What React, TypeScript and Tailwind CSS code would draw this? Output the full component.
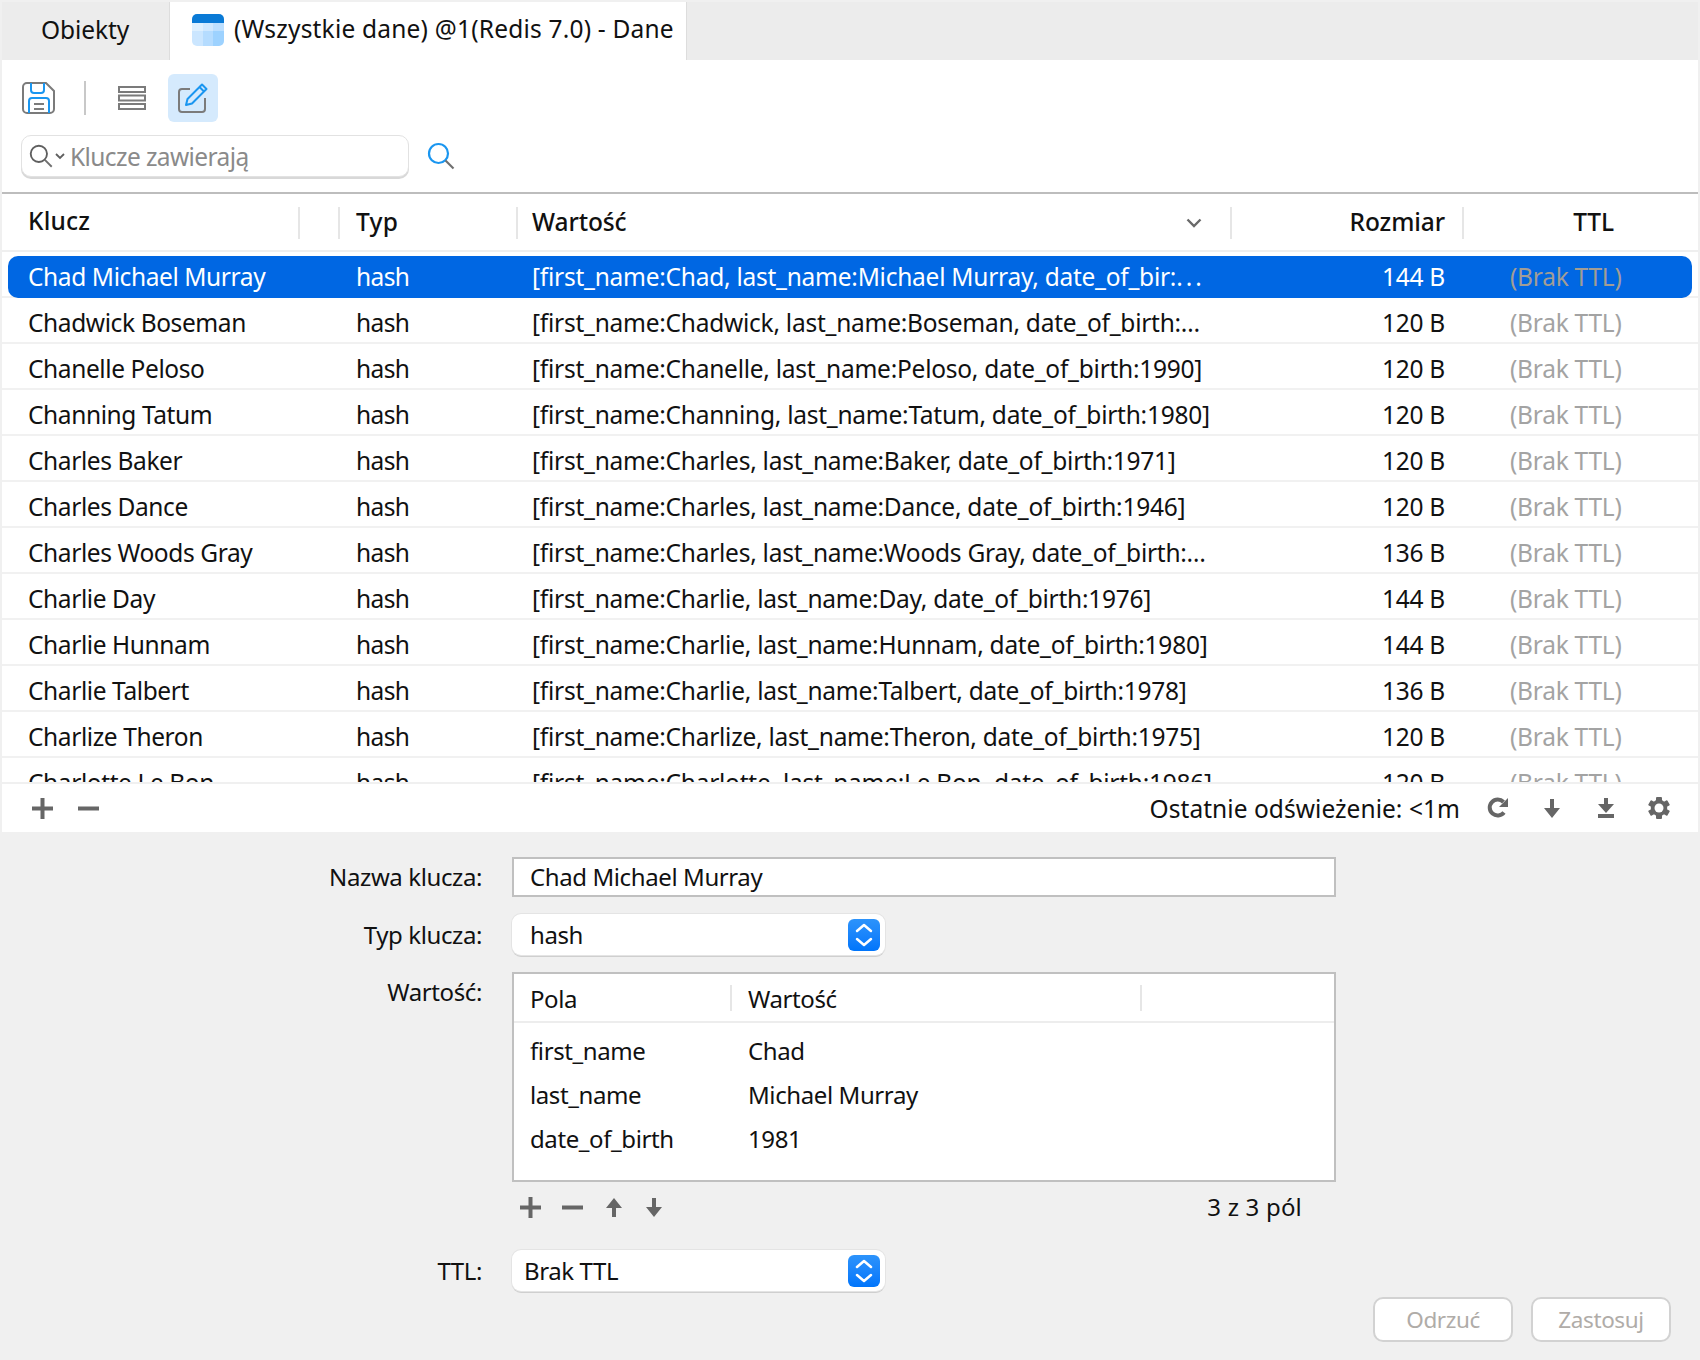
const rows = [
  { key: "Chad Michael Murray", value: "[first_name:Chad, last_name:Michael Murray, date_of_bir:", tail: "...", size: "144 B" },
  { key: "Chadwick Boseman", value: "[first_name:Chadwick, last_name:Boseman, date_of_birth:…", size: "120 B" },
  { key: "Chanelle Peloso", value: "[first_name:Chanelle, last_name:Peloso, date_of_birth:1990]", size: "120 B" },
  { key: "Channing Tatum", value: "[first_name:Channing, last_name:Tatum, date_of_birth:1980]", size: "120 B" },
  { key: "Charles Baker", value: "[first_name:Charles, last_name:Baker, date_of_birth:1971]", size: "120 B" },
  { key: "Charles Dance", value: "[first_name:Charles, last_name:Dance, date_of_birth:1946]", size: "120 B" },
  { key: "Charles Woods Gray", value: "[first_name:Charles, last_name:Woods Gray, date_of_birth:…", size: "136 B" },
  { key: "Charlie Day", value: "[first_name:Charlie, last_name:Day, date_of_birth:1976]", size: "144 B" },
  { key: "Charlie Hunnam", value: "[first_name:Charlie, last_name:Hunnam, date_of_birth:1980]", size: "144 B" },
  { key: "Charlie Talbert", value: "[first_name:Charlie, last_name:Talbert, date_of_birth:1978]", size: "136 B" },
  { key: "Charlize Theron", value: "[first_name:Charlize, last_name:Theron, date_of_birth:1975]", size: "120 B" },
  { key: "Charlotte Le Bon", value: "[first_name:Charlotte, last_name:Le Bon, date_of_birth:1986]", size: "120 B" },
];

const fields = [
  { name: "first_name", value: "Chad" },
  { name: "last_name", value: "Michael Murray" },
  { name: "date_of_birth", value: "1981" },
];

function TableIcon() {
  return (
    <svg width="32" height="32" viewBox="0 0 32 32">
      <defs>
        <clipPath id="tab-clip">
          <rect width="32" height="32" rx="5" />
        </clipPath>
      </defs>
      <g clipPath="url(#tab-clip)">
        <rect width="32" height="9" fill="#0a7ad6" />
        <rect y="9" width="11" height="8" fill="#def0ff" />
        <rect x="11" y="9" width="10" height="8" fill="#cfe8ff" />
        <rect x="21" y="9" width="11" height="8" fill="#bcdfff" />
        <rect y="17" width="11" height="15" fill="#cbe6ff" />
        <rect x="11" y="17" width="10" height="15" fill="#b5dcff" />
        <rect x="21" y="17" width="11" height="15" fill="#9dd2ff" />
      </g>
    </svg>
  );
}

function SaveIcon() {
  return (
    <svg width="34" height="34" viewBox="0 0 34 34" fill="none" strokeWidth="2">
      <path d="M5 2h19l8 8v18a4 4 0 0 1-4 4H5a4 4 0 0 1-4-4V6a4 4 0 0 1 4-4z" stroke="#7b7b7b" />
      <path d="M9 2v7a3 3 0 0 0 3 3h7a3 3 0 0 0 3-3V2" stroke="#1a96f0" />
      <path d="M7 32V20a3 3 0 0 1 3-3h14a3 3 0 0 1 3 3v12" stroke="#1a96f0" />
      <path d="M12 23h10M12 28h10" stroke="#7b7b7b" />
    </svg>
  );
}

function ListIcon() {
  return (
    <svg width="30" height="24" viewBox="0 0 30 24" fill="none" stroke="#7b7b7b" strokeWidth="2">
      <rect x="2" y="1" width="26" height="5" />
      <rect x="2" y="9.5" width="26" height="5" />
      <rect x="2" y="18" width="26" height="5" />
    </svg>
  );
}

function EditIcon() {
  return (
    <svg width="32" height="32" viewBox="0 0 32 32" fill="none" strokeWidth="2">
      <path d="M13 7H5a3 3 0 0 0-3 3v17a3 3 0 0 0 3 3h20a3 3 0 0 0 3-3V16" stroke="#7b7b7b" />
      <path d="M9 23l1.5-6L25 2.5l4.5 4.5L15 21.5z" stroke="#1a96f0" strokeLinejoin="round" />
      <path d="M22.5 5l4.5 4.5" stroke="#1a96f0" />
    </svg>
  );
}

function SearchIcon({ color, size }: { color: string; size: number }) {
  return (
    <svg width={size} height={size} viewBox="0 0 28 28" fill="none" strokeWidth="2.2">
      <circle cx="11.5" cy="11.5" r="9.5" stroke={color} />
      <path d="M18.5 18.5l8 8" stroke="#6f6f6f" />
    </svg>
  );
}

function PlusIcon() {
  return (
    <svg width="21" height="21" viewBox="0 0 21 21" fill="#666">
      <path d="M8.5 0h4v8.5h8.5v4h-8.5v8.5h-4v-8.5H0v-4h8.5z" />
    </svg>
  );
}

function MinusIcon() {
  return (
    <svg width="21" height="21" viewBox="0 0 21 21" fill="#666">
      <rect y="8.5" width="21" height="4" />
    </svg>
  );
}

function Refresh() {
  return (
    <svg width="22" height="22" viewBox="0 0 22 22" fill="none">
      <path d="M17 15.5A8 8 0 1 1 16.5 5" stroke="#666" strokeWidth="4" />
      <path d="M21 1v9h-9z" fill="#666" />
    </svg>
  );
}

function ArrowDown() {
  return (
    <svg width="16" height="19" viewBox="0 0 16 19" fill="#666">
      <path d="M6 0h4v9h6l-8 10-8-10h6z" />
    </svg>
  );
}

function ArrowUp() {
  return (
    <svg width="16" height="19" viewBox="0 0 16 19" fill="#666">
      <path d="M6 19h4v-9h6L8 0 0 10h6z" />
    </svg>
  );
}

function DownloadTo() {
  return (
    <svg width="16" height="20" viewBox="0 0 16 20" fill="#666">
      <path d="M6 0h4v6h6l-8 9-8-9h6z" />
      <rect y="16" width="16" height="4" />
    </svg>
  );
}

function Gear() {
  return (
    <svg width="22" height="22" viewBox="0 0 22 22">
      <g fill="#666">
        <rect x="8" y="0" width="6" height="22" rx="1" />
        <rect x="8" y="0" width="6" height="22" rx="1" transform="rotate(60 11 11)" />
        <rect x="8" y="0" width="6" height="22" rx="1" transform="rotate(120 11 11)" />
      </g>
      <circle cx="11" cy="11" r="6.5" fill="none" stroke="#666" strokeWidth="3.5" />
      <circle cx="11" cy="11" r="4.5" fill="#fff" />
    </svg>
  );
}

function Stepper() {
  return (
    <div className="flex h-[32px] w-[32px] items-center justify-center rounded-[6px] bg-gradient-to-b from-[#2c93fb] to-[#0075fb]">
      <svg width="20" height="28" viewBox="0 0 20 28" fill="none" stroke="#fff" strokeWidth="2.5" strokeLinecap="round" strokeLinejoin="round">
        <path d="M3 10l7-6 7 6M3 18l7 6 7-6" />
      </svg>
    </div>
  );
}

function Select({ label, pad }: { label: string; pad: string }) {
  return (
    <div className="flex h-[41px] w-[373px] items-center justify-between rounded-[9px] bg-white pr-[5px] shadow-[0_0_0_1px_#e4e4e4,0_2px_0_#cfcfcf]">
      <span className={pad}>{label}</span>
      <Stepper />
    </div>
  );
}

export default function App() {
  return (
    <div className="flex h-[1360px] w-[1700px] flex-col bg-[#f0f0f0] px-[2px] pb-[2px] pt-[2px] font-['Noto_Sans',sans-serif] text-[24.5px] leading-none tracking-[-0.25px] text-[#111]">
      {/* tabs */}
      <div className="flex h-[58px] shrink-0 bg-[#ececec]">
        <div className="flex w-[167px] items-center pl-[39px] pb-[2px] tracking-[-0.1px]">Obiekty</div>
        <div className="flex w-[518px] items-center gap-[10px] bg-white pb-[3px] pl-[23px] tracking-[0.2px] shadow-[inset_1px_0_0_#ddd,inset_-1px_0_0_#ddd]">
          <TableIcon />
          <span>(Wszystkie dane) @1(Redis 7.0) - Dane</span>
        </div>
      </div>

      <div className="flex shrink-0 flex-col bg-white">
        {/* toolbar */}
        <div className="flex h-[134px] flex-col border-b-2 border-[#bdbdbd] pl-[20px]">
          <div className="mt-[14px] flex h-[48px] items-center">
            <SaveIcon />
            <div className="ml-[28px] h-[34px] w-[2px] bg-[#c8c8c8]" />
            <div className="ml-[31px]">
              <ListIcon />
            </div>
            <div className="ml-[21px] flex h-[48px] w-[50px] items-center justify-center rounded-[6px] bg-[#d5eafd]">
              <EditIcon />
            </div>
          </div>
          <div className="-ml-px mt-[13px] flex items-center">
            <div className="flex h-[42px] w-[388px] items-center rounded-[10px] border border-[#e2e2e2] bg-white pl-[7px] tracking-[-0.6px] text-[#8a8a8a] shadow-[0_2px_0_#d8d8d8]">
              <SearchIcon color="#5f5f5f" size={24} />
              <svg width="10" height="7" viewBox="0 0 10 7" fill="none" stroke="#5f5f5f" strokeWidth="1.8" className="ml-[2px] mr-[5px]">
                <path d="M1 1l4 4 4-4" />
              </svg>
              <span className="pt-[2px]">Klucze zawierają</span>
            </div>
            <div className="ml-[18px]">
              <SearchIcon color="#1a96f0" size={28} />
            </div>
          </div>
        </div>

        {/* column headers */}
        <div className="flex h-[58px] items-center border-b-2 border-[#efefef] pt-[1px] font-medium tracking-[-0.1px]">
          <div className="flex h-[32px] w-[298px] items-center border-r-2 border-[#e6e6e6] pb-[3px] pl-[26px] tracking-[0.2px]">Klucz</div>
          <div className="h-[32px] w-[40px] border-r-2 border-[#e6e6e6]" />
          <div className="flex h-[32px] w-[178px] items-center border-r-2 border-[#e6e6e6] pl-[16px] tracking-[0.3px]">Typ</div>
          <div className="flex h-[32px] w-[714px] items-center justify-between border-r-2 border-[#e6e6e6] pl-[14px] pr-[28px]">
            <span>Wartość</span>
            <svg width="16" height="10" viewBox="0 0 16 10" fill="none" stroke="#6a6a6a" strokeWidth="2.4">
              <path d="M1.5 1.5L8 8l6.5-6.5" />
            </svg>
          </div>
          <div className="flex h-[32px] w-[232px] items-center justify-end border-r-2 border-[#e6e6e6] pr-[17px]">Rozmiar</div>
          <div className="flex h-[32px] flex-1 items-center justify-end pr-[84px]">TTL</div>
        </div>

        {/* rows */}
        <div className="h-[530px] overflow-hidden">
          {rows.map((row, i) => (
            <div key={row.key} className="h-[46px] px-[6px] pt-[4px] shadow-[inset_0_-2px_0_#f1f1f1]">
              <div
                className={`grid h-[42px] grid-cols-[348px_176px_699px_214px_1fr] items-center whitespace-nowrap rounded-[10px] ${
                  i === 0 ? "bg-[#0067e3] text-white" : ""
                }`}
              >
                <div className="pl-[20px] tracking-[-0.4px]">{row.key}</div>
                <div className="tracking-[-0.6px]">hash</div>
                <div>
                  {row.value}
                  {row.tail && <span className="tracking-[3px]">{row.tail}</span>}
                </div>
                <div className="text-right">{row.size}</div>
                <div className={`pl-[65px] ${i === 0 ? "text-[#a29d95]" : "text-[#a3a3a3]"}`}>(Brak TTL)</div>
              </div>
            </div>
          ))}
        </div>

        {/* list footer */}
        <div className="flex h-[50px] items-center border-t-2 border-[#f0f0f0] pl-[30px] pr-[28px]">
          <PlusIcon />
          <div className="ml-[25px]">
            <MinusIcon />
          </div>
          <span className="ml-auto pt-[2px] tracking-[0.05px]">Ostatnie odświeżenie: &lt;1m</span>
          <div className="ml-[27px] flex w-[22px] justify-center">
            <Refresh />
          </div>
          <div className="ml-[32px] flex w-[22px] justify-center">
            <ArrowDown />
          </div>
          <div className="ml-[32px] flex w-[22px] justify-center">
            <DownloadTo />
          </div>
          <div className="ml-[31px] flex w-[22px] justify-center">
            <Gear />
          </div>
        </div>
      </div>

      {/* detail form */}
      <div className="grid flex-1 grid-cols-[480px_824px] content-start gap-x-[30px] pt-[25px] text-[24px] tracking-[-0.4px]">
        <div className="flex h-[40px] items-center justify-end">Nazwa klucza:</div>
        <div className="flex h-[40px] items-center border-2 border-[#c0c0c0] bg-white pl-[16px]">Chad Michael Murray</div>

        <div className="mt-[17px] flex h-[41px] items-center justify-end">Typ klucza:</div>
        <div className="mt-[17px]">
          <Select label="hash" pad="pl-[18px]" />
        </div>

        <div className="mt-[17px] flex h-[40px] items-center justify-end">Wartość:</div>
        <div className="mt-[17px] flex h-[210px] flex-col border-2 border-[#c0c0c0] bg-white">
          <div className="flex h-[49px] shrink-0 items-center border-b-2 border-[#ededed]">
            <div className="flex h-[26px] w-[218px] items-center border-r-2 border-[#e6e6e6] pl-[16px] pt-[2px]">Pola</div>
            <div className="flex h-[26px] w-[410px] items-center border-r-2 border-[#e6e6e6] pl-[16px] pt-[2px]">Wartość</div>
          </div>
          <div className="pt-[6px]">
            {fields.map((f) => (
              <div key={f.name} className="flex h-[44px] items-center">
                <div className="w-[218px] pl-[16px]">{f.name}</div>
                <div className="pl-[16px]">{f.value}</div>
              </div>
            ))}
          </div>
        </div>

        <div />
        <div className="flex h-[50px] items-center pl-[8px]">
          <PlusIcon />
          <div className="ml-[21px]">
            <MinusIcon />
          </div>
          <div className="ml-[23px] flex w-[16px]">
            <ArrowUp />
          </div>
          <div className="ml-[24px] flex w-[16px]">
            <ArrowDown />
          </div>
          <span className="ml-auto mr-[34px] tracking-[0.2px]">3 z 3 pól</span>
        </div>

        <div className="mt-[18px] flex h-[41px] items-center justify-end">TTL:</div>
        <div className="mt-[18px]">
          <Select label="Brak TTL" pad="pl-[12px]" />
        </div>

        <div className="col-span-2 -mr-[362px] mt-[6px] flex justify-end gap-[18px] pr-[27px] text-[22.5px] text-[#b0aca8]">
          <button className="h-[45px] w-[140px] rounded-[10px] border-2 border-[#d2d2d2] bg-white pt-[2px]">Odrzuć</button>
          <button className="h-[45px] w-[140px] rounded-[10px] border-2 border-[#d2d2d2] bg-white pt-[2px]">Zastosuj</button>
        </div>
      </div>
    </div>
  );
}
